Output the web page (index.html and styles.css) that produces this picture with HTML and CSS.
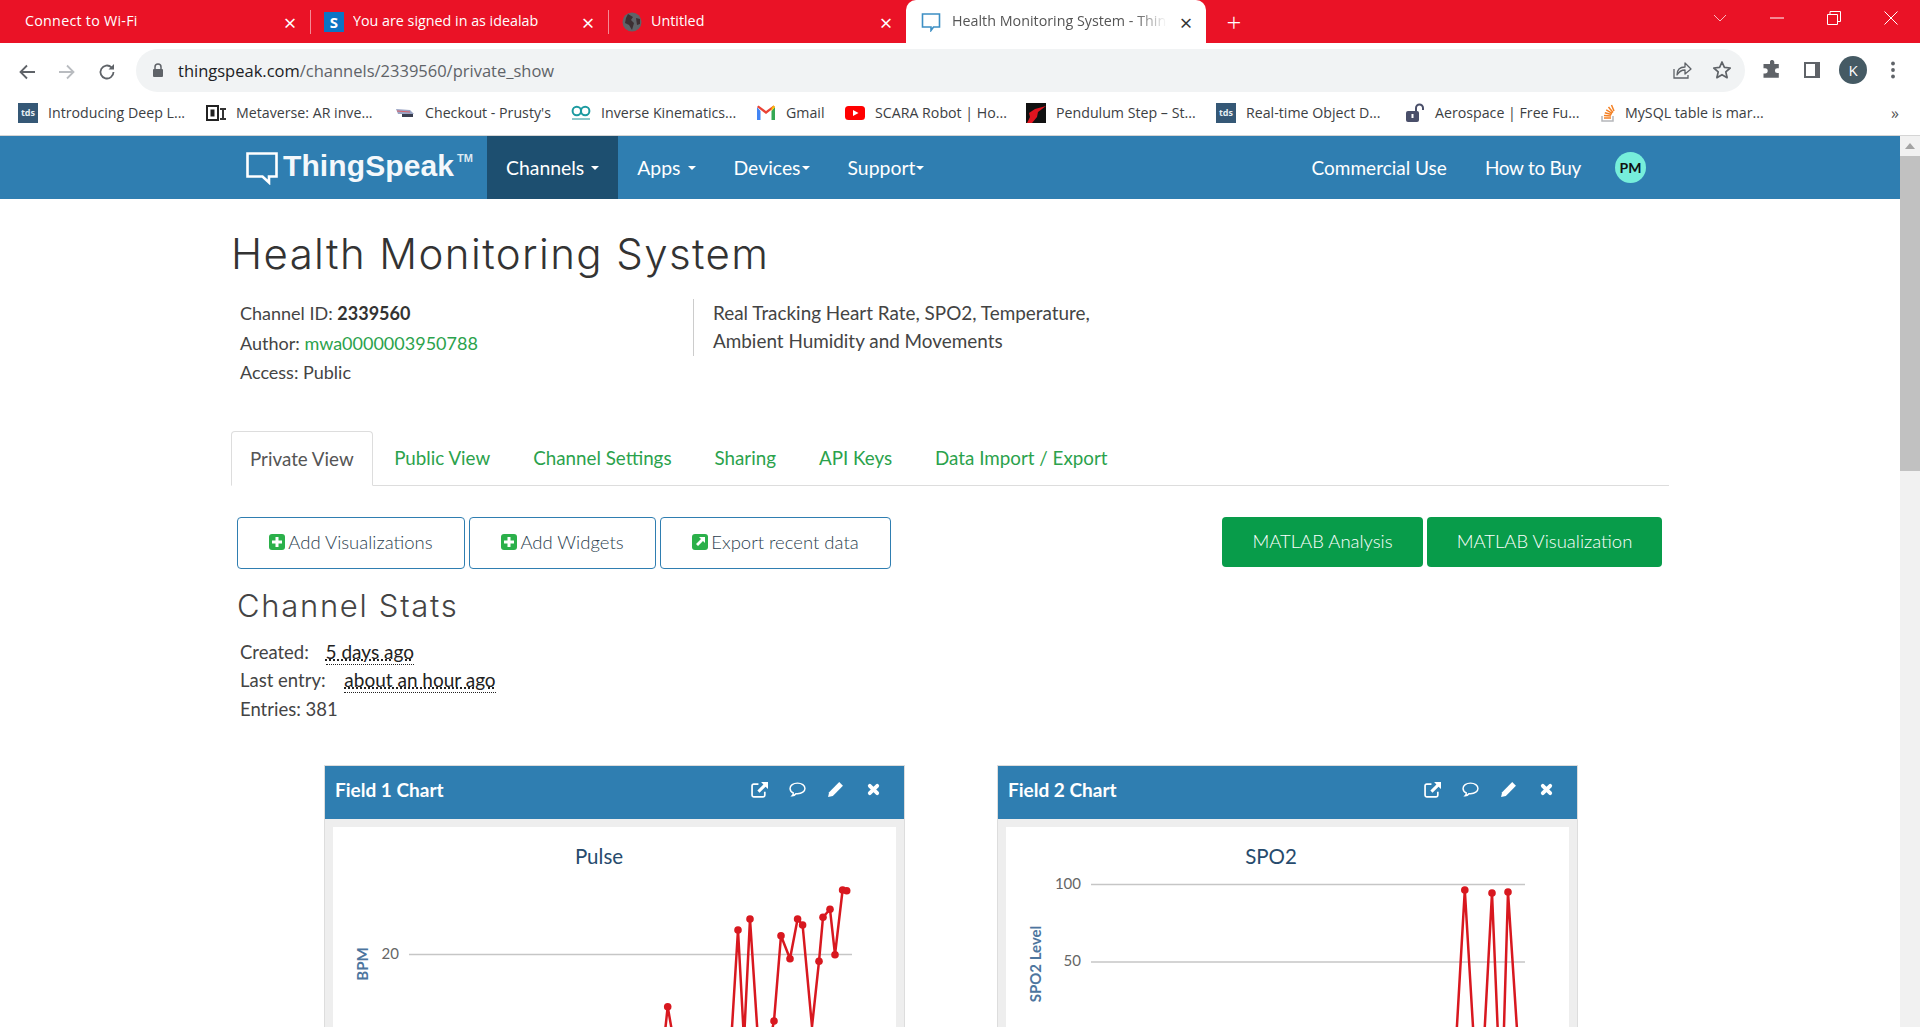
FILE: index.html
```html
<!DOCTYPE html>
<html lang="en">
<head>
    <meta charset="UTF-8">
    <meta name="viewport" content="width=device-width, initial-scale=1.0">
    <title>Health Monitoring System - ThingSpeak</title>
    <link rel="stylesheet" href="styles.css">
</head>
<body>
    <!-- browser tabs -->
    <div class="tabstrip">
        <div class="tab tab-first">
            <span class="tab-title">Connect to Wi-Fi</span>
            <span class="tab-close">&times;</span>
        </div>
        <div class="tab">
            <span class="fav-s">S</span>
            <span class="tab-title">You are signed in as idealab</span>
            <span class="tab-close">&times;</span>
        </div>
        <div class="tab">
            <svg class="fav" viewBox="0 0 20 20"><circle cx="10" cy="10" r="9.5" fill="#5f6368"/><path d="M6 2l5 3-2 3 3 3-2 7-3-5-4-2 1-5zM14 6l4 1 0 5-3 1z" fill="#3c2f33"/></svg>
            <span class="tab-title">Untitled</span>
            <span class="tab-close">&times;</span>
        </div>
        <div class="tab tab-active">
            <svg class="fav" viewBox="0 0 20 20"><path d="M1.5 2h17v13h-6l-2.5 3.5v-3.5h-8.500z" fill="none" stroke="#3d8fc4" stroke-width="1.600"/></svg>
            <span class="tab-title">Health Monitoring System - ThingSpeak</span>
            <span class="tab-close">&times;</span>
        </div>
        <span class="new-tab">+</span>
        <div class="win-controls">
            <svg viewBox="0 0 14 14"><path d="M1 4l6 6 6-6" fill="none" stroke="#f8b9c0" stroke-width="1"/></svg>
            <svg viewBox="0 0 14 14"><path d="M0 7h14" stroke="#fff" stroke-width="1"/></svg>
            <svg viewBox="0 0 14 14"><path d="M.5 3.500h10v10h-10zM3 3.500v-3h10.500v10h-3" fill="none" stroke="#fff" stroke-width="1"/></svg>
            <svg viewBox="0 0 14 14"><path d="M.5.5l13 13M13.500.5l-13 13" stroke="#fff" stroke-width="1"/></svg>
        </div>
    </div>

    <!-- address bar -->
    <div class="toolbar">
        <svg class="tool" viewBox="0 0 20 20"><path d="M18 10H4M10 3.500L3.500 10l6.500 6.500" fill="none" stroke="#5f6368" stroke-width="1.800"/></svg>
        <svg class="tool" viewBox="0 0 20 20"><path d="M2 10h14M10 3.500l6.500 6.500-6.500 6.500" fill="none" stroke="#b9bcc0" stroke-width="1.800"/></svg>
        <svg class="tool" viewBox="0 0 20 20"><path d="M16.500 10a6.500 6.500 0 1 1-2-4.700" fill="none" stroke="#5f6368" stroke-width="1.800"/><path d="M17 2v5.500h-5.500z" fill="#5f6368"/></svg>
        <div class="omnibox">
            <svg class="lock" viewBox="0 0 12 14"><path d="M3 6V4a3 3 0 0 1 6 0v2" fill="none" stroke="#5f6368" stroke-width="1.500"/><rect x="1" y="6" width="10" height="8" rx="1" fill="#5f6368"/></svg>
            <span class="url"><b>thingspeak.com</b>/channels/2339560/private_show</span>
            <svg class="omni-icon icon-share" viewBox="0 0 20 20"><path d="M2 9v9h14v-3" fill="none" stroke="#5f6368" stroke-width="1.300"/><path d="M5 15c0-5 3-8 8-8V3l6 6-6 5v-4c-4 0-6 1.500-8 5z" fill="none" stroke="#5f6368" stroke-width="1.300" stroke-linejoin="round"/></svg>
            <svg class="omni-icon" viewBox="0 0 20 20"><path d="M10 2l2.400 5.400 5.800.6-4.400 3.900 1.300 5.800-5.100-3-5.100 3 1.300-5.800L1.800 8l5.800-.6z" fill="none" stroke="#5f6368" stroke-width="1.700" stroke-linejoin="round"/></svg>
        </div>
        <div class="tool-right">
            <svg class="tool" viewBox="0 0 20 20"><path d="M8 1.500a2.200 2.200 0 0 1 4.300.6V4h4.500v4.300h-1.500a2.400 2.400 0 0 0 0 4.800h1.500v4.700H1.500v-4.400h1.600a2.600 2.600 0 0 0 0-5.200H1.500V4H8z" fill="#5f6368"/></svg>
            <svg class="tool" viewBox="0 0 20 20"><rect x="2" y="2" width="16" height="16" fill="#5f6368"/><rect x="4" y="4" width="9" height="12" fill="#fff"/></svg>
            <span class="avatar">K</span>
            <svg class="tool tool-menu" viewBox="0 0 20 20"><circle cx="10" cy="3.500" r="1.900" fill="#5f6368"/><circle cx="10" cy="10" r="1.900" fill="#5f6368"/><circle cx="10" cy="16.500" r="1.900" fill="#5f6368"/></svg>
        </div>
    </div>

    <!-- bookmarks -->
    <div class="bookmarks">
        <a class="bm"><span class="fav-tds">tds</span>Introducing Deep L...</a>
        <a class="bm"><svg class="bm-icon" viewBox="0 0 20 20"><rect x="1" y="3" width="11" height="14" fill="none" stroke="#222" stroke-width="2"/><rect x="4.500" y="6.500" width="4" height="7" fill="#222"/><path d="M14 5h6v2h-2v8h2v2h-6v-2h2V7h-2z" fill="#333"/></svg>Metaverse: AR inve...</a>
        <a class="bm"><svg class="bm-icon" viewBox="0 0 20 20"><path d="M1 6l14 1 4 4H3z" fill="#9aa5c4"/><path d="M2 8l13 1" stroke="#d9606a" stroke-width="1"/><rect x="7" y="11" width="11" height="3" fill="#3a3f50"/></svg>Checkout - Prusty's</a>
        <a class="bm"><svg class="bm-icon" viewBox="0 0 20 20"><circle cx="5.800" cy="8" r="4.200" fill="none" stroke="#1b9aa0" stroke-width="2"/><circle cx="14.200" cy="8" r="4.200" fill="none" stroke="#1b9aa0" stroke-width="2"/><path d="M1 16h18" stroke="#8cc8ca" stroke-width="2"/></svg>Inverse Kinematics...</a>
        <a class="bm"><svg class="bm-icon" viewBox="0 0 20 20"><path d="M1 4v13h3.500V8z" fill="#4285f4"/><path d="M15.500 8v9H19V4z" fill="#34a853"/><path d="M1 4l9 7 9-7-1.500-1.500L10 8 2.500 2.500z" fill="#ea4335"/><path d="M15.500 4.800l2-2.300L19 4l-3.500 4z" fill="#fbbc04"/></svg>Gmail</a>
        <a class="bm"><svg class="bm-icon" viewBox="0 0 20 20"><rect y="3" width="20" height="14" rx="3.500" fill="#f00"/><path d="M8 7l5.500 3L8 13z" fill="#fff"/></svg>SCARA Robot | Ho...</a>
        <a class="bm"><svg class="bm-icon" viewBox="0 0 20 20"><rect width="20" height="20" fill="#111"/><path d="M3 10l6-4 11-3-8 6-1 5-5 6H1l3-6z" fill="#e2141f"/></svg>Pendulum Step – St...</a>
        <a class="bm"><span class="fav-tds">tds</span>Real-time Object D...</a>
        <a class="bm"><svg class="bm-icon" viewBox="0 0 20 20"><rect x="1" y="8" width="13" height="11" rx="2" fill="#4a4f6a"/><rect x="6.500" y="11" width="2" height="4" fill="#fff"/><path d="M11 8V5a3.500 3.500 0 0 1 7 0v2" fill="none" stroke="#4a4f6a" stroke-width="2"/></svg>Aerospace | Free Fu...</a>
        <a class="bm bm-tight"><svg class="bm-icon" viewBox="0 0 20 20"><path d="M4 13v5h11v-5" fill="none" stroke="#b5b7ba" stroke-width="1.500"/><path d="M6 15h7M6 12.500l7 .6M6.800 9.700l6.800 1.800M8.200 6.800l6 3.500M10.500 4l4.500 5.500M13.500 2l2.500 6" stroke="#f48024" stroke-width="1.500"/></svg>MySQL table is mar...</a>
        <span class="bm-more">»</span>
    </div>

    <div class="page">
        <div class="page-main">
            <nav class="navbar">
                <div class="brand">
                    <svg class="brand-mark" viewBox="0 0 32 33"><path d="M1.500 1.500h29v23h-7.500v6l-6.500-6h-15z" fill="none" stroke="#fff" stroke-width="2.600"/></svg>
                    <span class="brand-name">ThingSpeak</span><span class="brand-tm">TM</span>
                </div>
                <ul class="nav-list nav-main">
                    <li class="nav-item active">Channels<i class="caret caret-wide"></i></li>
                    <li class="nav-item">Apps<i class="caret caret-wide"></i></li>
                    <li class="nav-item">Devices<i class="caret"></i></li>
                    <li class="nav-item">Support<i class="caret"></i></li>
                </ul>
                <ul class="nav-list nav-right">
                    <li class="nav-item">Commercial Use</li>
                    <li class="nav-item nav-buy">How to Buy</li>
                    <li class="nav-user"><span class="user-badge">PM</span></li>
                </ul>
            </nav>

            <div class="container">
                <h1>Health Monitoring System</h1>

                <div class="channel-meta">
                    <ul class="meta-list">
                        <li>Channel ID: <b>2339560</b></li>
                        <li>Author: <a class="link">mwa0000003950788</a></li>
                        <li>Access: Public</li>
                    </ul>
                    <p class="channel-desc">Real Tracking Heart Rate, SPO2, Temperature,<br>Ambient Humidity and Movements</p>
                </div>

                <ul class="view-tabs">
                    <li class="view-tab active">Private View</li>
                    <li class="view-tab">Public View</li>
                    <li class="view-tab">Channel Settings</li>
                    <li class="view-tab">Sharing</li>
                    <li class="view-tab">API Keys</li>
                    <li class="view-tab">Data Import / Export</li>
                </ul>

                <div class="actions">
                    <a class="btn-outline btn-vis"><svg class="btn-icon" viewBox="0 0 16 16"><rect width="16" height="16" rx="3" fill="#2bb04a"/><path d="M6.500 3h3v3.500H13v3H9.500V13h-3V9.500H3v-3h3.500z" fill="#fff"/></svg>Add Visualizations</a>
                    <a class="btn-outline btn-wid"><svg class="btn-icon" viewBox="0 0 16 16"><rect width="16" height="16" rx="3" fill="#2bb04a"/><path d="M6.500 3h3v3.500H13v3H9.500V13h-3V9.500H3v-3h3.500z" fill="#fff"/></svg>Add Widgets</a>
                    <a class="btn-outline btn-exp"><svg class="btn-icon" viewBox="0 0 16 16"><rect width="16" height="16" rx="3" fill="#2bb04a"/><path d="M7 3h6v6l-2-2-5 5-2-2 5-5z" fill="#fff"/></svg>Export recent data</a>
                    <div class="actions-right">
                        <a class="btn-green btn-ana">MATLAB Analysis</a>
                        <a class="btn-green btn-viz">MATLAB Visualization</a>
                    </div>
                </div>

                <h2>Channel Stats</h2>
                <ul class="stats">
                    <li>Created: <abbr class="when">5 days ago</abbr></li>
                    <li>Last entry: <abbr class="when when-last">about an hour ago</abbr></li>
                    <li class="stat-count">Entries: 381</li>
                </ul>

                <div class="charts">
                    <section class="chart-card">
                        <header class="chart-head">
                            <span class="chart-title">Field 1 Chart</span>
                            <span class="chart-tools">
                                <svg viewBox="0 0 16 16"><use href="#i-open"/></svg>
                                <svg viewBox="0 0 16 16"><use href="#i-talk"/></svg>
                                <svg viewBox="0 0 16 16"><use href="#i-pen"/></svg>
                                <svg viewBox="0 0 16 16"><use href="#i-x"/></svg>
                            </span>
                        </header>
                        <div class="chart-body">
                            <svg class="plot" viewBox="333 827 563 200">
                                <text class="plot-title" x="599" y="864">Pulse</text>
                                <line class="grid" x1="409" y1="954.500" x2="852" y2="954.500"/>
                                <text class="tick" x="399" y="959">20</text>
                                <text class="axis-name" transform="translate(368 964) rotate(-90)">BPM</text>
                                <polyline class="series" points="662,1060 667.700,1006.700 677,1060 730,1060 738,930 744,1040 750,919 758,1040 770,1040 774,1021 781,935.700 790,958.700 797.600,919 802.600,925 812,1026.700 819,961.300 823,917.300 830,909.300 835,954.700 842.600,890 846.700,890.700"/>
                                <g class="dots">
                                    <circle cx="667.700" cy="1006.700" r="3.800"/><circle cx="738" cy="930" r="3.800"/><circle cx="750" cy="919" r="3.800"/><circle cx="774" cy="1021" r="3.800"/><circle cx="781" cy="935.700" r="3.800"/><circle cx="790" cy="958.700" r="3.800"/><circle cx="797.600" cy="919" r="3.800"/><circle cx="802.600" cy="925" r="3.800"/><circle cx="819" cy="961.300" r="3.800"/><circle cx="823" cy="917.300" r="3.800"/><circle cx="830" cy="909.300" r="3.800"/><circle cx="835" cy="954.700" r="3.800"/><circle cx="842.600" cy="890" r="3.800"/><circle cx="846.700" cy="890.700" r="3.800"/>
                                </g>
                            </svg>
                        </div>
                    </section>
                    <section class="chart-card">
                        <header class="chart-head">
                            <span class="chart-title">Field 2 Chart</span>
                            <span class="chart-tools">
                                <svg viewBox="0 0 16 16"><use href="#i-open"/></svg>
                                <svg viewBox="0 0 16 16"><use href="#i-talk"/></svg>
                                <svg viewBox="0 0 16 16"><use href="#i-pen"/></svg>
                                <svg viewBox="0 0 16 16"><use href="#i-x"/></svg>
                            </span>
                        </header>
                        <div class="chart-body">
                            <svg class="plot" viewBox="1006 827 563 200">
                                <text class="plot-title" x="1271" y="864">SPO2</text>
                                <line class="grid" x1="1091" y1="884.500" x2="1525" y2="884.500"/>
                                <line class="grid" x1="1091" y1="962" x2="1525" y2="962"/>
                                <text class="tick" x="1081" y="889">100</text>
                                <text class="tick" x="1081" y="966">50</text>
                                <text class="axis-name" transform="translate(1041 964) rotate(-90)">SPO2 Level</text>
                                <polyline class="series" points="1455,1060 1464.800,890 1475,1060 1483,1060 1492,893 1499,1060 1503,1060 1508,892 1519,1060"/>
                                <g class="dots">
                                    <circle cx="1464.800" cy="890" r="3.800"/><circle cx="1492" cy="893" r="3.800"/><circle cx="1508" cy="892" r="3.800"/>
                                </g>
                            </svg>
                        </div>
                    </section>
                </div>
            </div>
        </div>

        <div class="scrollbar">
            <span class="scroll-up"></span>
            <span class="scroll-thumb"></span>
        </div>
    </div>

    <!-- panel icons -->
    <svg class="sprite">
        <symbol id="i-open" viewBox="0 0 16 16"><path d="M7 3H2.500A1.500 1.500 0 0 0 1 4.500v9A1.500 1.500 0 0 0 2.500 15h9a1.500 1.500 0 0 0 1.500-1.500V10" fill="none" stroke="#fff" stroke-width="1.600"/><path d="M9.500 1H16v6.500l-2.300-2.200L8 11 6 9l5.700-5.700z" fill="#fff"/></symbol>
        <symbol id="i-talk" viewBox="0 0 16 16"><path d="M8 2c4 0 7 2.200 7 5s-3 5-7 5l-1.500 0c-.8 1.200-2 2-3.500 2 .7-.7 1-1.600 1-2.800C2.200 10.300 1 8.800 1 7c0-2.800 3-5 7-5z" fill="none" stroke="#fff" stroke-width="1.400"/></symbol>
        <symbol id="i-pen" viewBox="0 0 16 16"><path d="M11.500 1l3.500 3.500-9.500 9.500L1 15l1-4.500z" fill="#fff"/></symbol>
        <symbol id="i-x" viewBox="0 0 16 16"><path d="M4.500 4.500l7 7M11.500 4.500l-7 7" stroke="#fff" stroke-width="3.600" stroke-linecap="round"/></symbol>
    </svg>
</body>
</html>
```

FILE: styles.css
```css
* {
    box-sizing: border-box;
}

html, body {
    margin: 0;
    height: 100%;
    overflow: hidden;
}

body {
    background-color: #fff;
    color: #444;
    font-family: "Lato", "Noto Sans", sans-serif;
    font-size: 18px;
}

ul {
    list-style: none;
    margin: 0;
    padding: 0;
}

.sprite {
    display: none;
}

/* Browser tabs */
.tabstrip {
    display: flex;
    align-items: center;
    height: 43px;
    background-color: #ea1226;
    color: #fff;
    font-family: "Open Sans", "Noto Sans", sans-serif;
    font-size: 14.3px;
}

.tab {
    display: flex;
    align-items: center;
    gap: 9px;
    width: 298px;
    height: 43px;
    padding: 0 12px 0 14px;
    background: linear-gradient(#f58a95, #f58a95) left center / 1px 24px no-repeat;
}

.tab-first {
    width: 310px;
    padding-left: 25px;
    background: none;
}

.tab-first .tab-title {
    letter-spacing: .25px;
}

.tab-title {
    flex: 1;
    margin-top: -2px;
    white-space: nowrap;
    overflow: hidden;
}

.tab-close {
    width: 16px;
    font-size: 22px;
    line-height: 20px;
    text-align: center;
}

.tab-active {
    width: 300px;
    padding: 0 12px 0 15px;
    border-radius: 10px 10px 0 0;
    background: #fff;
    color: #555;
    gap: 11px;
}

.tab-active .tab-title {
    -webkit-mask-image: linear-gradient(to right, #000 85%, transparent);
    mask-image: linear-gradient(to right, #000 85%, transparent);
}

.tab-active .tab-close {
    color: #333;
}

.fav {
    width: 20px;
    height: 20px;
    flex: none;
}

.fav-s {
    width: 20px;
    height: 20px;
    flex: none;
    background-color: #0b74c4;
    color: #fff;
    font-weight: 700;
    font-size: 15px;
    line-height: 20px;
    text-align: center;
}

.new-tab {
    width: 56px;
    text-align: center;
    font-size: 26px;
    font-weight: 300;
    line-height: 1;
}

.win-controls {
    display: flex;
    align-items: center;
    margin-left: auto;
    padding-right: 22px;
    gap: 43px;
}

.win-controls svg {
    width: 14px;
    height: 14px;
    flex: none;
    margin-top: -7px;
}

/* Address bar */
.toolbar {
    display: flex;
    align-items: center;
    height: 57px;
    padding: 0 0 0 17px;
    gap: 20px;
}

.tool {
    width: 20px;
    height: 20px;
    flex: none;
}

.omnibox {
    display: flex;
    align-items: center;
    flex: none;
    width: 1609px;
    height: 43px;
    margin-left: -1px;
    margin-top: -3px;
    padding: 0 13px 0 16px;
    border-radius: 22px;
    background-color: #f1f3f4;
}

.lock {
    width: 12px;
    height: 14px;
    flex: none;
}

.url {
    flex: 1;
    margin-left: 14px;
    color: #5f6368;
    font-family: "Open Sans", "Noto Sans", sans-serif;
    font-size: 16.5px;
    white-space: nowrap;
}

.url b {
    color: #202124;
    font-weight: 400;
}

.omni-icon {
    width: 20px;
    height: 20px;
    flex: none;
    margin-left: 20px;
}

.tool-right {
    display: flex;
    align-items: center;
    gap: 20px;
    margin-left: -3px;
    margin-top: -3px;
}

.avatar {
    width: 28px;
    height: 28px;
    margin-left: -3px;
    border-radius: 50%;
    background-color: #455a64;
    color: #fff;
    font-family: "Open Sans", sans-serif;
    font-size: 15px;
    line-height: 28px;
    text-align: center;
}

.tool-menu {
    margin-left: -4px;
}

/* Bookmarks */
.bookmarks {
    display: grid;
    grid-template-columns: 188px 189px 176px 185px 89px 181px 190px 189px 193px 293px 1fr;
    align-items: center;
    height: 36px;
    padding: 0 0 10px 18px;
    border-bottom: 1px solid #d5d5d5;
    color: #3c4043;
    font-family: "Open Sans", "Noto Sans", sans-serif;
    font-size: 14.2px;
}

.bm {
    display: flex;
    align-items: center;
    gap: 10px;
    white-space: nowrap;
}

.bm-tight {
    gap: 7px;
}

.bm-icon, .fav-tds {
    width: 20px;
    height: 20px;
    flex: none;
}

.fav-tds {
    background-color: #355876;
    color: #e6edf2;
    font-size: 9px;
    font-weight: 700;
    line-height: 20px;
    text-align: center;
}

.bm-more {
    font-size: 16px;
    color: #555;
}

/* Site page */
.page {
    display: flex;
    height: 891px;
}

.page-main {
    flex: 1;
    min-width: 0;
}

.scrollbar {
    display: flex;
    flex-direction: column;
    align-items: center;
    width: 20px;
    background-color: #f1f1f1;
}

.scroll-up {
    width: 0;
    height: 0;
    margin: 7px 0 7px;
    border-left: 5px solid transparent;
    border-right: 5px solid transparent;
    border-bottom: 6px solid #a3a3a3;
}

.scroll-thumb {
    width: 100%;
    height: 315px;
    background-color: #c1c1c1;
}

.navbar {
    display: flex;
    align-items: stretch;
    height: 63px;
    padding-left: 246px;
    background-color: #2f7eb1;
    color: #fff;
}

.brand {
    display: flex;
    align-items: flex-start;
    width: 241px;
    padding-top: 15px;
}

.brand-mark {
    width: 32px;
    height: 33px;
    flex: none;
    margin-top: 1px;
}

.brand-name {
    margin-left: 5px;
    font-family: "Liberation Sans", Arial, sans-serif;
    font-size: 30px;
    font-weight: 700;
    line-height: 30px;
    letter-spacing: .1px;
    color: #f4f8fb;
}

.brand-tm {
    margin-left: 3px;
    font-family: "Liberation Sans", Arial, sans-serif;
    font-size: 11px;
    font-weight: 700;
    line-height: 14px;
    color: #dce9f2;
}

.nav-list {
    display: flex;
}

.nav-item {
    display: flex;
    align-items: center;
    padding: 0 19px;
    font-size: 19px;
    white-space: nowrap;
}

.nav-main .nav-item {
    font-size: 19.4px;
}

.nav-item.active {
    background-color: #1d4f70;
}

.nav-buy {
    letter-spacing: -.3px;
}

.caret {
    display: inline-block;
    width: 0;
    height: 0;
    margin-left: 1px;
    border-left: 4.5px solid transparent;
    border-right: 4.5px solid transparent;
    border-top: 4.5px solid #fff;
}

.caret-wide {
    margin-left: 7px;
}

.nav-right {
    margin-left: auto;
    padding-right: 254px;
}

.nav-user {
    display: flex;
    align-items: center;
    margin-left: 15px;
}

.user-badge {
    width: 31px;
    height: 31px;
    border-radius: 50%;
    background-color: #76eedb;
    color: #111;
    font-size: 14px;
    font-weight: 700;
    line-height: 31px;
    text-align: center;
}

/* Channel content */
.container {
    width: 1438px;
    margin: 0 auto;
}

h1 {
    margin: 30px 0 0;
    color: #333;
    font-family: "Inter", "Lato", sans-serif;
    font-size: 42px;
    font-weight: 300;
    line-height: 50px;
    letter-spacing: 1.4px;
}

.channel-meta {
    display: flex;
    margin-top: 20px;
}

.meta-list {
    width: 462px;
    padding-left: 9px;
}

.meta-list li {
    height: 28px;
    line-height: 28px;
}

.meta-list li:nth-child(2) {
    margin-top: 2px;
    margin-bottom: 1px;
}

.meta-list b {
    color: #333;
}

.link {
    color: #2ba24c;
}

.channel-desc {
    height: 57px;
    margin: 0;
    padding-left: 19px;
    border-left: 1px solid #ccc;
    font-size: 18.9px;
    line-height: 28px;
}

.view-tabs {
    display: flex;
    gap: 0;
    height: 55px;
    margin-top: 45px;
    border-bottom: 1px solid #ddd;
    font-size: 18.8px;
}

.view-tab {
    height: 55px;
    padding: 0 21.5px;
    color: #2ba24c;
    line-height: 54px;
    white-space: nowrap;
}

.view-tab.active {
    padding: 0 18px;
    border: 1px solid #ddd;
    border-bottom-color: #fff;
    border-radius: 4px 4px 0 0;
    color: #555;
    background-color: #fff;
    line-height: 53px;
}

.actions {
    display: flex;
    align-items: flex-start;
    gap: 4px;
    margin-top: 31px;
    padding: 0 7px 0 6px;
}

.btn-outline, .btn-green {
    display: flex;
    align-items: center;
    justify-content: center;
    padding-bottom: 2px;
    border-radius: 4px;
    font-size: 18.5px;
    font-weight: 300;
    white-space: nowrap;
}

.btn-outline {
    height: 52px;
    border: 1px solid #2f7eb1;
    color: #2d3f4f;
}

.btn-vis { width: 228px; }
.btn-wid { width: 187px; }
.btn-exp { width: 231px; }
.btn-ana { width: 201px; }
.btn-viz { width: 235px; }

.btn-icon {
    width: 16px;
    height: 16px;
    margin-right: 3px;
    flex: none;
}

.actions-right {
    display: flex;
    gap: 4px;
    margin-left: auto;
}

.btn-green {
    height: 50px;
    background-color: #089c4a;
    color: #fff;
}

h2 {
    margin: 17px 0 0 6px;
    color: #444;
    font-family: "Inter", "Lato", sans-serif;
    font-size: 31px;
    font-weight: 300;
    line-height: 40px;
    letter-spacing: 1.7px;
}

.stats {
    margin-top: 12px;
    padding-left: 9px;
    font-size: 18.5px;
}

.stats li {
    height: 28px;
    line-height: 28px;
}

.stats .stat-count {
    margin-top: 1px;
}

.when {
    margin-left: 12px;
    padding-bottom: 1px;
    border-bottom: 1px dotted #222;
    color: #222;
    font-size: 19px;
    text-decoration: underline dotted #222;
}

.when-last {
    margin-left: 14px;
}

.charts {
    display: flex;
    gap: 92px;
    margin-top: 42px;
    padding-left: 93px;
}

.chart-card {
    width: 581px;
    border: 1px solid #ddd;
    border-bottom: 0;
    background-color: #eee;
}

.chart-head {
    display: flex;
    align-items: center;
    justify-content: space-between;
    height: 53px;
    padding: 0 22px 6px 10px;
    background-color: #2f7eb1;
    color: #fff;
}

.chart-title {
    font-size: 19px;
    font-weight: 700;
}

.chart-tools {
    display: flex;
    gap: 21px;
}

.chart-tools svg {
    width: 17px;
    height: 17px;
}

.chart-body {
    margin: 8px 8px 0;
    height: 300px;
    background-color: #fff;
}

.plot {
    display: block;
    width: 563px;
    height: 200px;
    overflow: hidden;
}

.plot-title {
    fill: #274b6d;
    font-size: 20.5px;
    text-anchor: middle;
}

.grid {
    stroke: #c6c6c6;
    stroke-width: 1.500;
}

.tick {
    fill: #666;
    font-size: 15px;
    text-anchor: end;
}

.axis-name {
    fill: #4d759e;
    font-size: 15px;
    font-weight: 700;
    text-anchor: middle;
}

.series {
    fill: none;
    stroke: #d8181f;
    stroke-width: 2.500;
    stroke-linejoin: round;
}

.dots {
    fill: #d8181f;
}
```
